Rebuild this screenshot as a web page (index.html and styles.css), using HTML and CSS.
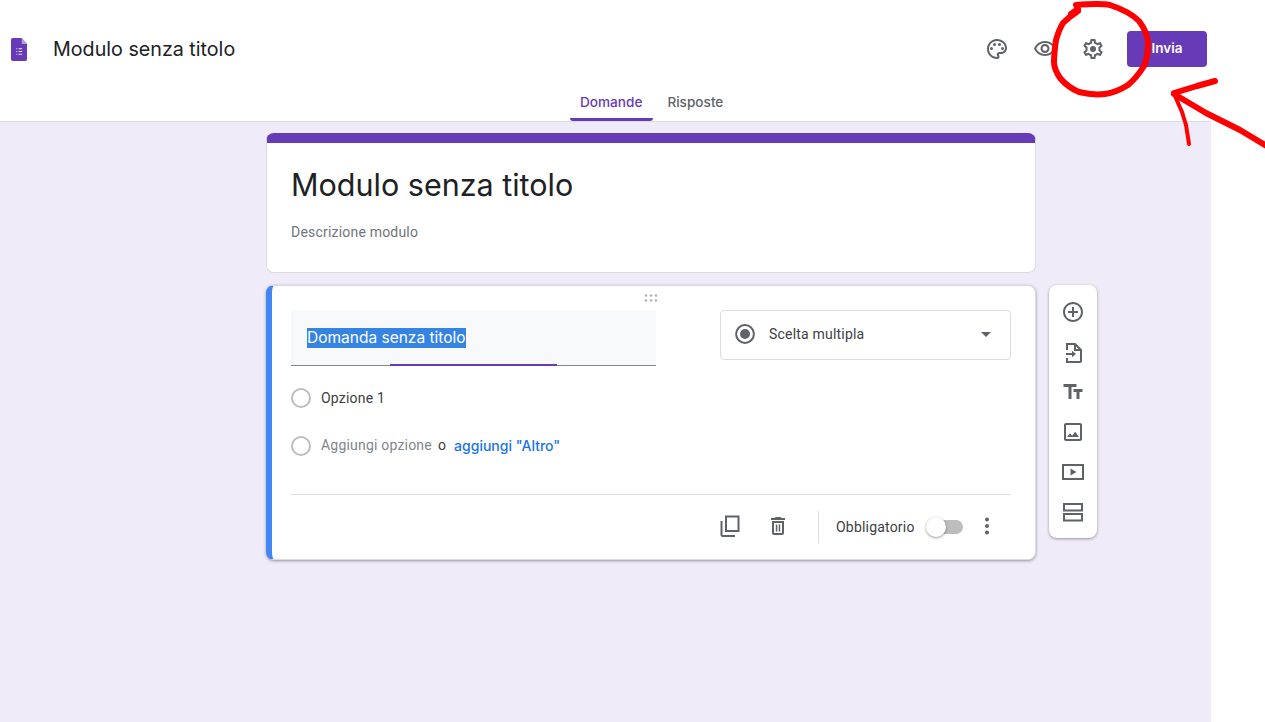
FILE: index.html
```html
<!DOCTYPE html>
<html lang="it">
<head>
<meta charset="utf-8">
<title>Modulo senza titolo</title>
<link rel="stylesheet" href="styles.css">
</head>
<body>
<div class="page">
  <header class="header">
    <div class="topbar">
      <svg class="doc-icon" viewBox="0 1 18 23" preserveAspectRatio="none"><path class="doc-body" d="M2 1h10l6 6v15a2 2 0 0 1-2 2H2a2 2 0 0 1-2-2V3a2 2 0 0 1 2-2z"/><path class="doc-fold" d="M12 1l6 6h-6z"/><path class="doc-lines" d="M6 11.200h1v1H6zM8.500 11.200h4v1h-4zM6 14h1v1H6zM8.500 14h4v1h-4zM6 16.800h1v1H6zM8.500 16.800h4v1h-4z"/></svg>
      <div class="doc-title">Modulo senza titolo</div>
      <div class="actions">
        <svg class="icon action" viewBox="0 0 24 24"><path d="M12 22C6.490 22 2 17.510 2 12S6.490 2 12 2s10 4.040 10 9c0 3.310-2.690 6-6 6h-1.770c-.28 0-.5.22-.5.5 0 .12.05.23.13.33.41.47.64 1.060.64 1.670A2.500 2.500 0 0 1 12 22zm0-18c-4.410 0-8 3.590-8 8s3.590 8 8 8c.28 0 .5-.22.5-.5a.54.54 0 0 0-.14-.35c-.41-.46-.63-1.050-.63-1.650a2.500 2.500 0 0 1 2.500-2.500H16c2.210 0 4-1.790 4-4 0-3.860-3.590-7-8-7z"/><circle cx="6.500" cy="11.500" r="1.500"/><circle cx="9.500" cy="7.500" r="1.500"/><circle cx="14.500" cy="7.500" r="1.500"/><circle cx="17.500" cy="11.500" r="1.500"/></svg>
        <svg class="icon action" viewBox="0 0 24 24"><path d="M12 6a9.770 9.770 0 0 1 8.820 5.500C19.170 14.870 15.790 17 12 17s-7.170-2.130-8.820-5.500A9.770 9.770 0 0 1 12 6m0-2C7 4 2.730 7.110 1 11.500 2.730 15.890 7 19 12 19s9.270-3.110 11-7.500C21.270 7.110 17 4 12 4zm0 5a2.500 2.500 0 0 1 0 5 2.500 2.500 0 0 1 0-5m0-2c-2.480 0-4.500 2.020-4.500 4.500S9.520 16 12 16s4.500-2.020 4.500-4.500S14.480 7 12 7z"/></svg>
        <svg class="icon action" viewBox="0 0 24 24"><path d="M19.430 12.980c.04-.32.07-.64.07-.98 0-.34-.03-.66-.07-.98l2.110-1.650c.19-.15.24-.42.12-.64l-2-3.460a.5.5 0 0 0-.61-.22l-2.490 1c-.52-.4-1.080-.73-1.690-.98l-.38-2.650A.488.488 0 0 0 14 2h-4c-.25 0-.46.18-.49.42l-.38 2.650c-.61.25-1.170.59-1.690.98l-2.490-1a.566.566 0 0 0-.18-.03c-.17 0-.34.09-.43.25l-2 3.460c-.13.22-.07.49.12.64l2.110 1.650c-.04.32-.07.65-.07.98 0 .33.03.66.07.98l-2.110 1.650c-.19.15-.24.42-.12.64l2 3.460a.5.5 0 0 0 .61.22l2.490-1c.52.4 1.080.73 1.690.98l.38 2.650c.03.24.24.42.49.42h4c.25 0 .46-.18.49-.42l.38-2.650c.61-.25 1.170-.59 1.690-.98l2.490 1c.06.02.12.03.18.03.17 0 .34-.09.43-.25l2-3.460c.12-.22.07-.49-.12-.64l-2.110-1.650zm-1.980-1.710c.04.31.05.52.05.73 0 .21-.02.43-.05.73l-.14 1.130.89.7 1.080.84-.7 1.210-1.270-.51-1.040-.42-.9.68c-.43.32-.84.56-1.250.73l-1.060.43-.16 1.130-.2 1.350h-1.400l-.19-1.350-.16-1.130-1.060-.43c-.43-.18-.83-.41-1.230-.71l-.91-.7-1.060.43-1.270.51-.7-1.210 1.080-.84.89-.7-.14-1.130c-.03-.31-.05-.54-.05-.74s.02-.43.05-.73l.14-1.130-.89-.7-1.080-.84.7-1.210 1.270.51 1.040.42.9-.68c.43-.32.84-.56 1.250-.73l1.060-.43.16-1.130.2-1.350h1.390l.19 1.350.16 1.130 1.060.43c.43.18.83.41 1.230.71l.91.7 1.060-.43 1.270-.51.7 1.210-1.070.85-.89.7.14 1.130z"/><circle cx="12" cy="12" r="3"/></svg>
        <button class="send">Invia</button>
      </div>
    </div>
    <nav class="tabs">
      <div class="tab tab-active">Domande</div>
      <div class="tab">Risposte</div>
    </nav>
  </header>

  <main class="main">
    <section class="card title-card">
      <h1 class="form-title">Modulo senza titolo</h1>
      <div class="form-desc">Descrizione modulo</div>
    </section>

    <div class="question-row">
      <section class="card question-card">
        <svg class="drag" viewBox="0 0 16 8"><circle cx="2" cy="1.500" r="1.300"/><circle cx="7" cy="1.500" r="1.300"/><circle cx="12" cy="1.500" r="1.300"/><circle cx="2" cy="6.500" r="1.300"/><circle cx="7" cy="6.500" r="1.300"/><circle cx="12" cy="6.500" r="1.300"/></svg>
        <div class="q-top">
          <div class="q-field">
            <span class="q-selected">Domanda senza titolo</span>
            <span class="q-focus"></span>
          </div>
          <div class="q-type">
            <svg class="icon type-radio" viewBox="0 0 20 20"><circle class="ring" cx="10" cy="10" r="8.900"/><circle cx="10" cy="10" r="5"/></svg>
            <span class="type-label">Scelta multipla</span>
            <span class="caret"></span>
          </div>
        </div>
        <div class="option opt-first">
          <span class="radio"></span>
          <span class="opt-text">Opzione 1</span>
        </div>
        <div class="option opt-second">
          <span class="radio"></span>
          <span class="opt-add">Aggiungi opzione</span>
          <span class="opt-or">o</span>
          <span class="opt-other">aggiungi "Altro"</span>
        </div>
        <div class="q-footer">
          <svg class="icon foot-icon foot-copy" viewBox="0 0 24 24"><path class="line" d="M8 2.500h12.500v14.500H8z"/><path class="line" d="M3.500 7v14a1 1 0 0 0 1 1H17"/></svg>
          <svg class="icon foot-icon foot-trash" viewBox="0 0 24 24"><path d="M6 19c0 1.100.9 2 2 2h8c1.100 0 2-.9 2-2V7H6v12zM8 9h8v10H8V9zm7.500-5l-1-1h-5l-1 1H5v2h14V4h-3.500z"/><path d="M9.800 10.500h1.500v7H9.800zM12.700 10.500h1.500v7h-1.500z"/></svg>
          <span class="foot-sep"></span>
          <span class="req-label">Obbligatorio</span>
          <span class="toggle"><span class="knob"></span></span>
          <svg class="icon foot-icon foot-more" viewBox="0 0 24 24"><circle cx="12" cy="5.500" r="2"/><circle cx="12" cy="12" r="2"/><circle cx="12" cy="18.500" r="2"/></svg>
        </div>
      </section>

      <aside class="toolbar">
        <svg class="icon" viewBox="0 0 24 24"><path d="M13 7h-2v4H7v2h4v4h2v-4h4v-2h-4V7zm-1-5C6.480 2 2 6.480 2 12s4.480 10 10 10 10-4.480 10-10S17.520 2 12 2zm0 18c-4.410 0-8-3.590-8-8s3.590-8 8-8 8 3.590 8 8-3.590 8-8 8z"/></svg>
        <svg class="icon" viewBox="0 0 24 24"><path class="line" d="M6 10V4h8l6 6v11a1 1 0 0 1-1 1H6v-4"/><path class="line" d="M14 4v6h6"/><path class="line" d="M5 14h8"/><path d="M11 10.800l4 3.200-4 3.200z"/></svg>
        <svg class="icon" viewBox="0 0 24 24"><path d="M2.500 4v3h5v12h3V7h5V4h-13zm19 5h-9v3h3v7h3v-7h3V9z"/></svg>
        <svg class="icon" viewBox="0 0 24 24"><path d="M19 5v14H5V5h14m0-2H5c-1.100 0-2 .9-2 2v14c0 1.100.9 2 2 2h14c1.100 0 2-.9 2-2V5c0-1.100-.9-2-2-2zm-4.860 8.860l-3 3.870L9 13.140 6 17h12l-3.860-5.140z"/></svg>
        <svg class="icon" viewBox="0 0 24 24"><path class="line" d="M2 5h20v14H2z"/><path d="M9.500 8.500v7l6-3.500z"/></svg>
        <svg class="icon" viewBox="0 0 24 24"><path class="line" d="M3 4h18v6.500H3zM3 14h18v6.500H3z"/></svg>
      </aside>
    </div>
  </main>

  <svg class="markup" viewBox="0 0 1265 722">
    <path class="pen" d="M1071 14L1078 9L1076 5C1088 4 1100 3 1110 5C1122 9 1132 14 1139 21C1145 29 1148 36 1148 44C1148 52 1147 59 1144 66C1139 74 1134 80 1128 85C1120 90 1113 93 1105 94C1096 95 1087 94 1079 92C1072 89 1065 84 1060 78C1056 72 1054 67 1054 62C1054 54 1055 47 1056 40C1058 33 1060 28 1063 23C1067 19 1072 15 1078 11"/>
    <path class="pen" d="M1174 93L1197 86L1215 81"/>
    <path class="pen" d="M1174 94L1206 113L1240 130L1270 148"/>
    <path class="pen pen-thin" d="M1175 96L1182 112L1186 125L1189 144"/>
  </svg>
</div>
</body>
</html>
```

FILE: styles.css
```css
* { box-sizing: border-box; }
html, body { margin: 0; padding: 0; }
body {
  background: #fff;
  font-family: Roboto, "Noto Sans", sans-serif;
  color: #202124;
  overflow: hidden;
}
.page { position: relative; width: 1265px; height: 722px; overflow: hidden; }
.icon { display: block; width: 24px; height: 24px; fill: #5f6368; flex: none; }
.line { fill: none; stroke: #5f6368; stroke-width: 2; }

.header { width: 1211px; height: 122px; border-bottom: 1px solid #dadce0; background: #fff; }
.topbar { display: flex; align-items: center; height: 85px; padding: 13px 4px 0 11px; }
.doc-icon { width: 16px; height: 23px; flex: none; }
.doc-body { fill: #673ab7; }
.doc-fold { fill: #b39ddb; }
.doc-lines { fill: #f1e9fb; }
.doc-title { margin-left: 26px; font-family: Inter, Roboto, sans-serif; font-size: 19.700px; font-weight: 400; color: #202124; }
.actions { display: flex; align-items: center; margin-left: auto; }
.action { margin-right: 24px; }
.send {
  width: 80px; height: 36px; margin-left: -2px; padding: 0 0 2px; border: 0; border-radius: 4px;
  background: #673ab7; color: #fff;
  font-family: Inter, Roboto, sans-serif; font-size: 13.500px; font-weight: 600;
}
.tabs { display: flex; gap: 2px; height: 36px; padding-left: 570px; }
.tab { height: 36px; padding: 9px 10px 0 12px; font-family: Inter, Roboto, sans-serif; font-size: 13.600px; font-weight: 500; color: #5f6368; }
.tab-active { padding: 9px 11px 0 10px; color: #673ab7; border-bottom: 3px solid #673ab7; border-radius: 0 0 3px 3px; }

.main { display: flex; flex-direction: column; gap: 12px; width: 1211px; height: 600px; padding: 11px 0 0 266px; background: #f0ebf8; }
.card { width: 770px; background: #fff; border: 1px solid #dadce0; border-radius: 8px; }
.title-card { height: 140px; padding: 26px 24px 0; border-top: 10px solid #673ab7; }
.form-title { margin: 0; font-family: Inter, Roboto, sans-serif; font-size: 30.500px; line-height: 32px; font-weight: 400; color: #202124; }
.form-desc { margin-top: 21px; font-size: 14px; line-height: 20px; letter-spacing: .2px; color: #70757a; }

.question-row { display: flex; align-items: flex-start; gap: 12px; }
.question-card {
  position: relative; height: 275px; padding: 24px 24px 0 19px;
  border-left: 6px solid #4285f4;
  box-shadow: 0 1px 3px rgba(60, 64, 67, .5);
}
.drag { position: absolute; left: 372px; top: 8px; width: 16px; height: 8px; fill: #b0b3b8; }
.q-top { display: flex; justify-content: space-between; align-items: flex-start; }
.q-field { position: relative; width: 365px; height: 56px; padding: 18px 16px 0; background: #f8f9fa; border-bottom: 1px solid #80868b; }
.q-selected { display: inline-block; height: 20px; font-family: Inter, Roboto, sans-serif; font-size: 15.500px; line-height: 20px; background: #3584e4; color: #fff; white-space: nowrap; }
.q-focus { position: absolute; left: 99px; bottom: -1px; width: 167px; height: 2px; background: #673ab7; }
.q-type { display: flex; align-items: center; width: 291px; height: 50px; padding: 0 19px 2px 14px; border: 1px solid #dadce0; border-radius: 4px; }
.type-radio { width: 20px; height: 20px; }
.ring { fill: none; stroke: #5f6368; stroke-width: 2; }
.type-label { margin-left: 14px; font-size: 14px; letter-spacing: .2px; color: #3c4043; }
.caret { margin-left: auto; width: 0; height: 0; border: 5px solid transparent; border-top-color: #5f6368; border-bottom-width: 0; }

.option { display: flex; align-items: center; height: 20px; font-size: 14px; letter-spacing: .2px; }
.opt-first { margin-top: 22px; }
.opt-second { margin-top: 28px; }
.radio { width: 20px; height: 20px; border: 2px solid #bdbdbd; border-radius: 50%; flex: none; }
.opt-text { margin-left: 10px; color: #3c4043; }
.opt-add { margin: 0 0 2px 10px; color: #80868b; }
.opt-or { margin: 0 0 2px 6px; color: #3c4043; }
.opt-other { margin: 0 0 2px 8px; font-family: Inter, Roboto, sans-serif; font-size: 14px; letter-spacing: 0; font-weight: 500; color: #1a73e8; }

.q-footer { display: flex; align-items: center; height: 64px; margin-top: 38px; padding-right: 12px; border-top: 1px solid #dadce0; }
.foot-icon { margin-bottom: 2px; }
.foot-copy { margin-left: 427px; }
.foot-trash { margin-left: 24px; }
.foot-sep { width: 1px; height: 32px; margin-left: 28px; background: #dadce0; }
.req-label { margin-left: 17px; font-size: 14px; letter-spacing: .2px; color: #3c4043; }
.toggle { position: relative; display: block; width: 34px; height: 14px; margin: 0 0 0 15px; border-radius: 7px; background: #bdbdbd; }
.knob { position: absolute; left: -4px; top: -3px; width: 20px; height: 20px; border-radius: 50%; background: #fff; box-shadow: 0 1px 3px rgba(0, 0, 0, .4); }
.foot-more { margin-left: 12px; }

.toolbar {
  display: flex; flex-direction: column; align-items: center; gap: 16px;
  width: 48px; height: 253px; padding: 15px 0 0;
  margin-left: 1px;
  background: #fff; border-radius: 8px;
  box-shadow: 0 1px 3px rgba(60, 64, 67, .5);
}

.markup { position: absolute; left: 0; top: 0; width: 1265px; height: 722px; pointer-events: none; }
.pen { fill: none; stroke: #f00; stroke-width: 6; stroke-linecap: round; stroke-linejoin: round; }
.pen-thin { stroke-width: 4; }
```
